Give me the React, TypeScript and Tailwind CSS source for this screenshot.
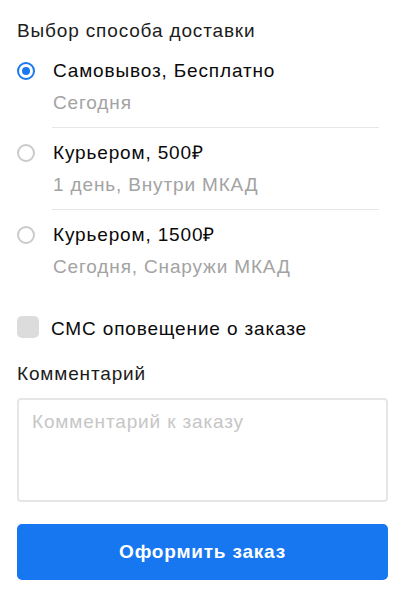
import React, { useState } from "react";

const options = [
  { title: "Самовывоз, Бесплатно", sub: "Сегодня" },
  { title: "Курьером, 500₽", sub: "1 день, Внутри МКАД" },
  { title: "Курьером, 1500₽", sub: "Сегодня, Снаружи МКАД" },
];

const FONT = '"Liberation Sans", Arial, Helvetica, sans-serif';

export default function App() {
  const [selected, setSelected] = useState(0);
  const [sms, setSms] = useState(false);
  return (
    <div
      className="w-[404px] h-[600px] bg-white pl-[17px] pr-[16px] pt-[19px] text-[19px] leading-[24px] tracking-[0.85px]"
      style={{ fontFamily: FONT }}
    >
      <div className="text-[#1c1c1c]">Выбор способа доставки</div>
      <div className="mt-[16px] flex flex-col">
        {options.map((o, i) => (
          <div key={i} className="flex flex-col">
            {i > 0 && <div className="ml-[35px] mr-[9px] h-px bg-[#e6e6e6]" />}
            <button
              type="button"
              onClick={() => setSelected(i)}
              className={`flex items-start text-left ${i > 0 ? "pt-[13px]" : ""} pb-[12px]`}
            >
              <span className="mt-[3px] w-[18px] h-[18px] shrink-0 flex items-center justify-center">
                {selected === i ? (
                  <span className="w-[18px] h-[18px] rounded-full border-2 border-[#1a78f0] flex items-center justify-center">
                    <span className="w-[8px] h-[8px] rounded-full bg-[#1a78f0]" />
                  </span>
                ) : (
                  <span className="w-[18px] h-[18px] rounded-full border-2 border-[#cacaca]" />
                )}
              </span>
              <span className="ml-[18px] flex flex-col">
                <span className="text-[#0a0a0a]">{o.title}</span>
                <span className="mt-[8px] text-[#a3a3a3]">{o.sub}</span>
              </span>
            </button>
          </div>
        ))}
      </div>
      <button
        type="button"
        onClick={() => setSms(!sms)}
        className="mt-[25px] flex items-start text-left"
      >
        <span
          className={`w-[22px] h-[22px] rounded-[5px] shrink-0 ${sms ? "bg-[#1a78f0]" : "bg-[#dcdcdc]"}`}
        />
        <span className="ml-[12px] mt-[1px] text-[#0a0a0a]">СМС оповещение о заказе</span>
      </button>
      <div className="mt-[21px] text-[#1c1c1c]">Комментарий</div>
      <textarea
        placeholder="Комментарий к заказу"
        className="mt-[12px] block w-full h-[104px] resize-none rounded-[4px] border-2 border-[#e6e6e6] px-[13px] pt-[10px] text-[19px] leading-[24px] tracking-[0.85px] text-[#111111] placeholder:text-[#c6c6c6] outline-none"
        style={{ fontFamily: FONT }}
      />
      <button
        type="button"
        className="mt-[22px] w-full h-[56px] rounded-[5px] bg-[#1677f0] text-white font-bold text-[19px] tracking-[0.8px]"
      >
        Оформить заказ
      </button>
    </div>
  );
}
